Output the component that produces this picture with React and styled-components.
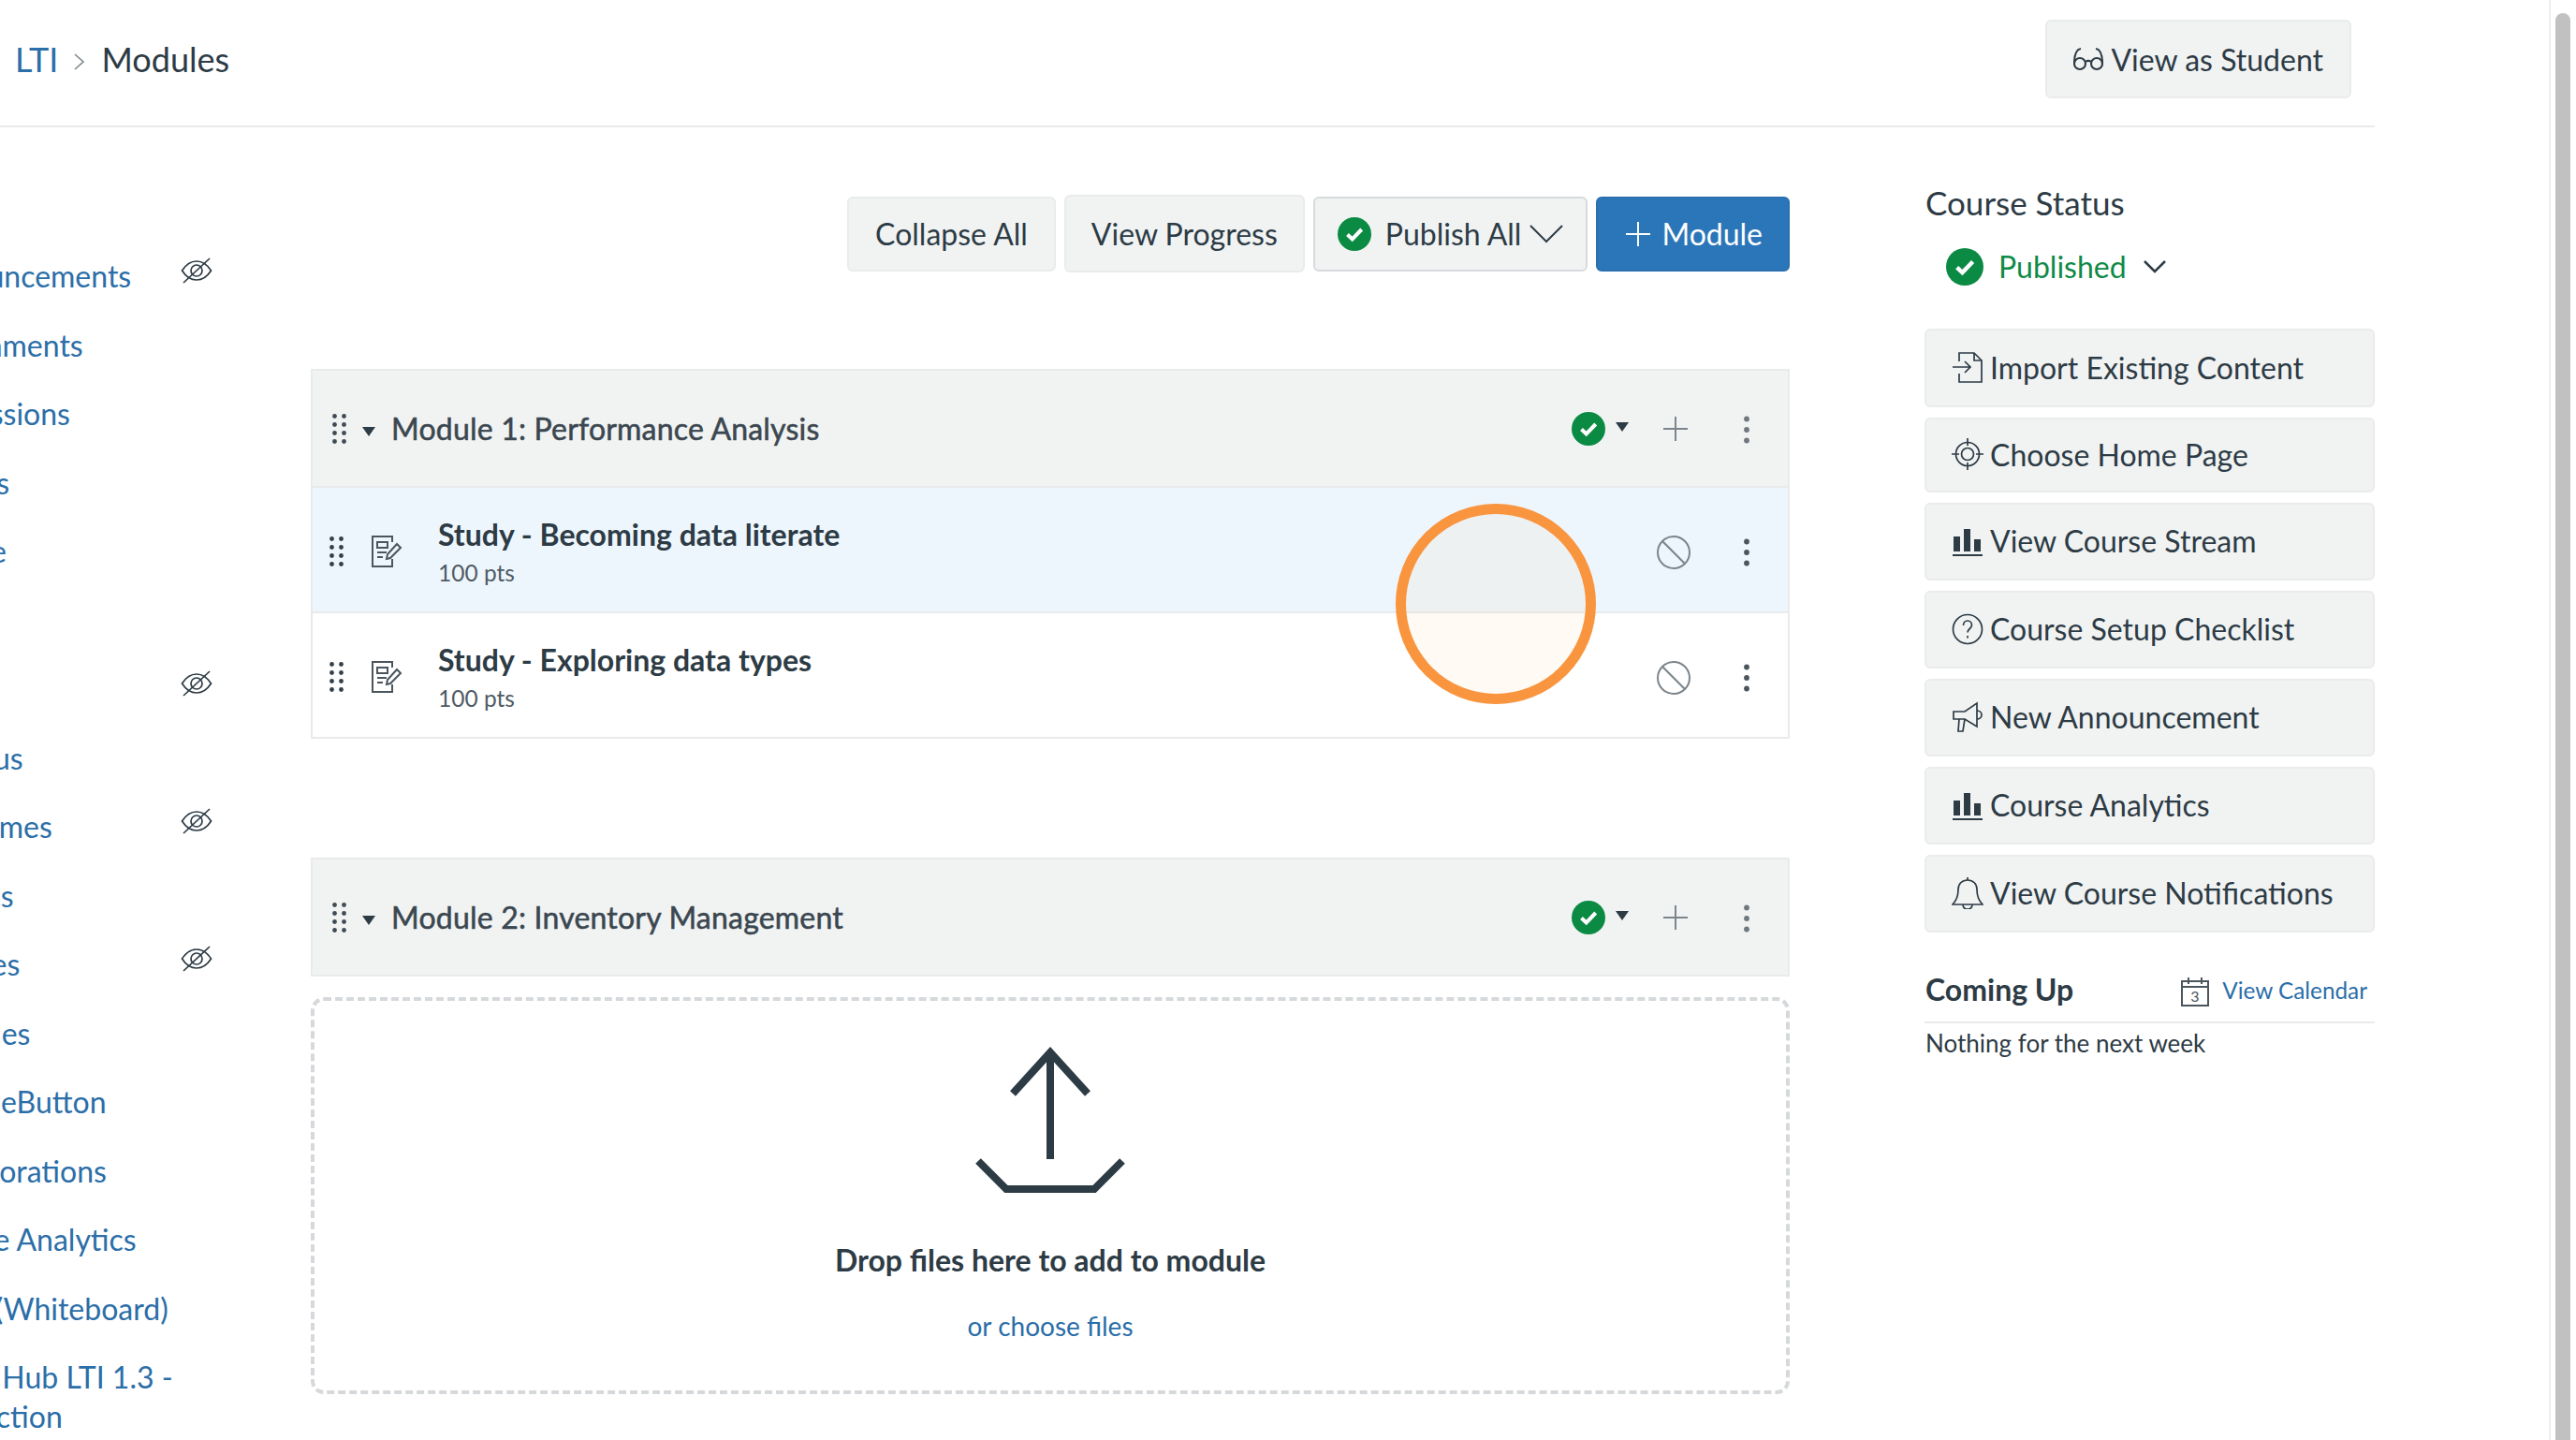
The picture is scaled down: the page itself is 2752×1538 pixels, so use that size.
import React from "react";
import styled, { createGlobalStyle } from "styled-components";

const Global = createGlobalStyle`
  html, body { margin: 0; padding: 0; background: #fff; }
  body { font-family: Lato, "Open Sans", sans-serif; color: #2d3b45; overflow: hidden; font-feature-settings: "liga" 1; }
  * { box-sizing: border-box; }
`;

const Page = styled.div`display: flex; width: 2752px; height: 1538px; overflow: hidden;`;
const Main = styled.div`width: 2723px; flex: none;`;
const Scrollbar = styled.div`width: 29px; flex: none; border-left: 2px solid #eeeeee; padding: 14px 6px 0 5px;`;
const Thumb = styled.div`height: 100%; background: #c1c1c1; border-radius: 8px 8px 0 0;`;

const Header = styled.header`
  width: 2537px; height: 136px; border-bottom: 2px solid #e8eaec;
  display: flex; align-items: flex-start; justify-content: space-between;
  padding: 21px 25px 0 16px;
`;
const Crumbs = styled.nav`display: flex; align-items: center; height: 84px; font-size: 36px;`;
const CrumbLink = styled.span`color: #2b6ea8;`;
const Sep = styled.svg`width: 14px; height: 20px; margin: 6px 16px 0 16px; fill: none; stroke: #7c858b; stroke-width: 1.6;`;

const Btn = styled.div`
  display: flex; align-items: center; flex: none; height: ${p => p.$h || 81}px;
  padding: 0 ${p => p.$pr ?? p.$px ?? 30}px ${p => p.$pb || 0}px ${p => p.$px ?? 30}px; gap: ${p => p.$gap ?? 8}px;
  background: ${p => p.$primary ? "#2b76b9" : "#f1f3f3"};
  color: ${p => p.$primary ? "#fff" : "#2d3b45"};
  border: 2px solid ${p => p.$primary ? "#2a70af" : p.$strong ? "#d7dadd" : "#e9ebec"};
  border-radius: 6px; font-size: 32px; white-space: nowrap;
`;

const Body = styled.div`display: flex; align-items: flex-start;`;
const Nav = styled.nav`width: 421px; margin-left: -89px; flex: none; padding-top: 49px;`;
const NavItem = styled.div`
  display: flex; justify-content: space-between; align-items: flex-start; width: 316px;
  min-height: 73.5px; padding-top: 15.75px; font-size: 32px; line-height: 42px; color: #2b6ea8; white-space: nowrap;
`;
const NavLines = styled.div``;
const NavTucked = styled.div`margin-left: -7px;`;
const EyeIcon = styled.svg`width: 34px; height: 28px; margin-top: 1px; flex: none; fill: none; stroke: #2d3b45; stroke-width: 1.7;`;

const Center = styled.main`width: 1580px; flex: none; padding-top: 71px;`;
const Toolbar = styled.div`display: flex; justify-content: flex-end; align-items: center; gap: 9px; height: 85px; margin-bottom: 102px;`;
const ModuleBox = styled.section`position: relative; margin-bottom: ${p => p.$mb || 0}px;`;
const ModuleHead = styled.div`
  display: flex; align-items: center; height: 127px; padding: 0 41px 0 21px;
  background: #f1f3f3; border: 2px solid #e8eaec;
  font-size: 32px; font-weight: 400; letter-spacing: .2px; -webkit-text-stroke: .55px #3b4750; color: #3b4750;
`;
const Grip = styled.svg`width: 15px; height: 32px; flex: none; fill: ${p => p.$c || "#3f4a52"};`;
const Caret = styled.svg`width: 14px; height: 10px; flex: none; fill: #2d3b45; margin: ${p => p.$m};`;
const Status = styled.div`display: flex; align-items: center; margin-left: auto;`;
const Plus = styled.svg`width: 26px; height: 26px; flex: none; margin: 0 60.5px 0 36.5px; stroke: #7c858b; stroke-width: 2;`;
const Kebab = styled.svg`width: 6px; height: 30px; flex: none; margin-top: 2px; fill: ${p => p.$c};`;
const Item = styled.div`
  display: flex; align-items: center; height: 134px; padding: 4px 41px 0 18px;
  background: ${p => p.$active ? "#eef6fd" : "#fff"};
  border: 2px solid #e8eaec; border-top: 0;
`;
const ItemIcon = styled.svg`width: 34px; height: 36px; flex: none; margin: 0 38px 0 29px; fill: none; stroke: #4b555d; stroke-width: 2;`;
const ItemText = styled.div`display: flex; flex-direction: column; gap: 4.5px;`;
const ItemTitle = styled.div`font-size: 32px; font-weight: 700; line-height: 42px; color: #2d3b45;`;
const ItemPts = styled.div`font-size: 24.500px; line-height: 32px; color: #4f5b64;`;
const Ban = styled.svg`width: 36px; height: 36px; flex: none; margin: 2px 57px 0 auto; fill: none; stroke: #7c858b; stroke-width: 2;`;
const Ring = styled.div`
  position: absolute; left: 1159px; top: 144px; width: 214px; height: 214px; border-radius: 50%;
  border: 11px solid #f9953f; background: rgba(250, 150, 40, .05);
`;
const Drop = styled.div`
  margin-top: 22px; height: 424px; border: 4px dashed #d6d9db; border-radius: 14px;
  display: flex; flex-direction: column; align-items: center; padding-top: 49px;
`;
const Upload = styled.svg`width: 160px; height: 158px; flex: none; fill: none; stroke: #2d3b45; stroke-width: 8;`;
const DropTitle = styled.div`margin-top: 49px; font-size: 32px; font-weight: 700; line-height: 42px;`;
const DropLink = styled.div`margin-top: 30px; font-size: 28px; line-height: 38px; color: #2b6ea8;`;

const Aside = styled.aside`width: 481px; margin-left: 144px; flex: none; padding-top: 58.5px;`;
const AsideTitle = styled.div`font-size: 35px; line-height: 42px; padding-left: 1px;`;
const PublishedRow = styled.div`display: flex; align-items: center; height: 44px; margin: 26px 0 44.5px 23px; font-size: 32px; color: #0f8a48; gap: 16px;`;
const Check = styled.svg`width: ${p => p.$s}px; height: ${p => p.$s}px; flex: none;`;
const Chev = styled.svg`flex: none; fill: none; stroke: #2d3b45; stroke-width: ${p => p.$w || 2.5};`;
const ActionList = styled.div`display: flex; flex-direction: column; gap: 11px;`;
const Icon = styled.svg`width: 34px; height: 34px; flex: none; fill: none; stroke: #2d3b45; stroke-width: 1.7;`;
const UpHead = styled.div`
  display: flex; align-items: center; justify-content: space-between; margin-top: 37px;
  height: 60px; border-bottom: 2px solid #e8eaec; padding: 0 8px 10px 1px;
`;
const UpTitle = styled.div`font-size: 32px; font-weight: 700; line-height: 42px;`;
const CalLink = styled.div`display: flex; align-items: center; gap: 14px; font-size: 24.3px; color: #2b6ea8;`;
const CalIcon = styled.svg`width: 30px; height: 32px; margin-top: 3px; fill: none; stroke: #4b555d; stroke-width: 2;`;
const CalNum = styled.text`font-family: Lato, sans-serif; font-size: 16px; fill: #4b555d; stroke: none; text-anchor: middle;`;
const Nothing = styled.div`margin-top: 3px; font-size: 26px; line-height: 36px; padding-left: 1px;`;

const Dots = ({ c }) => (
  <Grip viewBox="0 0 15 32" $c={c}>
    {[2.5, 11.5, 20.5, 29.5].map(y => [2.5, 12.5].map(x => <circle key={x + "-" + y} cx={x} cy={y} r="2.4" />))}
  </Grip>
);
const Kb = ({ c }) => (
  <Kebab viewBox="0 0 6 30" $c={c}><circle cx="3" cy="3.5" r="2.9" /><circle cx="3" cy="15" r="2.9" /><circle cx="3" cy="26.5" r="2.9" /></Kebab>
);
const CheckCircle = ({ s }) => (
  <Check viewBox="0 0 36 36" $s={s}>
    <circle cx="18" cy="18" r="18" fill="#0b8a43" />
    <path d="M10.5 18.5l5.2 5 10-10.5" fill="none" stroke="#fff" strokeWidth="4" />
  </Check>
);
const Eye = () => (
  <EyeIcon viewBox="0 0 34 28">
    <path d="M1.500 14C6 7 11 4 17 4s11 3 15.500 10C28 21 23 24 17 24S6 21 1.500 14z" />
    <circle cx="17" cy="14" r="6" />
    <path d="M3 27L31 1" />
  </EyeIcon>
);
const PageIcon = () => (
  <ItemIcon viewBox="0 0 34 36">
    <path d="M23 8V2H2v32h21v-8" />
    <rect x="7" y="8" width="11" height="6" />
    <path d="M7 19h10M7 24h6" />
    <path d="M17 26l1-5L28 10l4 4-11 11z" />
  </ItemIcon>
);
const BanIcon = () => (
  <Ban viewBox="0 0 36 36"><circle cx="18" cy="18" r="17" /><path d="M6 6l24 24" /></Ban>
);
const Bars = () => (
  <Icon viewBox="0 0 34 34">
    <path d="M2 12h7v16H2zM13 4h7v24h-7zM24 15h7v13h-7z" fill="#2d3b45" stroke="none" />
    <path d="M1 32h32" strokeWidth="2" />
  </Icon>
);
const Head = ({ title }) => (
  <ModuleHead>
    <Dots />
    <Caret viewBox="0 0 14 10" $m="6px 17px 0 17px"><path d="M0 0h14L7 10z" /></Caret>
    {title}
    <Status>
      <CheckCircle s={36} />
      <Caret viewBox="0 0 14 10" $m="-4px 0 0 11px"><path d="M0 0h14L7 10z" /></Caret>
      <Plus viewBox="0 0 26 26"><path d="M13 0v26M0 13h26" /></Plus>
      <Kb c="#70777d" />
    </Status>
  </ModuleHead>
);

const navItems = [
  ["Home"], ["Announcements", 1], ["Assignments"], ["Discussions"], ["Grades"], ["People"], ["Pages"], ["Files", 1],
  ["Syllabus"], ["Outcomes", 1], ["Rubrics"], ["Quizzes", 1], ["Modules"], ["BigBlueButton"], ["Collaborations"],
  ["Course Analytics"], ["Draw (Whiteboard)"],
];

export default function App() {
  return (
    <>
      <Global />
      <Page>
        <Main>
          <Header>
            <Crumbs>
              <CrumbLink>LTI</CrumbLink>
              <Sep viewBox="0 0 14 20"><path d="M2 2l9 8-9 8" /></Sep>
              <span>Modules</span>
            </Crumbs>
            <Btn $h={84} $px={28}>
              <Icon viewBox="0 0 32 32" style={{ strokeWidth: 2.1, width: 32, height: 32 }}>
                <circle cx="7" cy="21" r="6" /><circle cx="25" cy="21" r="6" />
                <path d="M1 21C1 13 2 6 8 5M31 21C31 13 30 6 24 5M13 19c2-1.500 4-1.500 6 0" />
              </Icon>
              View as Student
            </Btn>
          </Header>
          <Body>
            <Nav>
              {navItems.map(([t, eye]) => (
                <NavItem key={t}>{t}{eye && <Eye />}</NavItem>
              ))}
              <NavItem>
                <NavLines>
                  Portal Hub LTI 1.3 -
                  <NavTucked>Connection</NavTucked>
                </NavLines>
              </NavItem>
            </Nav>
            <Center>
              <Toolbar>
                <Btn $px={28} $h={80}>Collapse All</Btn>
                <Btn $px={27} $h={83}>View Progress</Btn>
                <Btn $px={24} $h={80} $strong $gap={0}>
                  <CheckCircle s={36} />
                  <span style={{ marginLeft: 15 }}>Publish All</span>
                  <Chev viewBox="0 0 36 20" width="36" height="20" style={{ marginLeft: 9 }} $w={2}><path d="M1 1l17 17L35 1" /></Chev>
                </Btn>
                <Btn $primary $px={30} $pr={27} $h={80} $gap={12}>
                  <svg width="26" height="26" viewBox="0 0 26 26" stroke="#fff" strokeWidth="2"><path d="M13 0v26M0 13h26" /></svg>
                  Module
                </Btn>
              </Toolbar>
              <ModuleBox $mb={127}>
                <Head title="Module 1: Performance Analysis" />
                <Item $active>
                  <Dots c="#333f48" />
                  <PageIcon />
                  <ItemText>
                    <ItemTitle>Study - Becoming data literate</ItemTitle>
                    <ItemPts>100 pts</ItemPts>
                  </ItemText>
                  <BanIcon />
                  <Kb c="#4b555d" />
                </Item>
                <Item>
                  <Dots c="#333f48" />
                  <PageIcon />
                  <ItemText>
                    <ItemTitle>Study - Exploring data types</ItemTitle>
                    <ItemPts>100 pts</ItemPts>
                  </ItemText>
                  <BanIcon />
                  <Kb c="#4b555d" />
                </Item>
                <Ring />
              </ModuleBox>
              <ModuleBox>
                <Head title="Module 2: Inventory Management" />
                <Drop>
                  <Upload viewBox="0 0 160 158">
                    <path d="M40 50L80 6l40 44M80 6v114" />
                    <path d="M3 122l30 30h94l30-30" />
                  </Upload>
                  <DropTitle>Drop files here to add to module</DropTitle>
                  <DropLink>or choose files</DropLink>
                </Drop>
              </ModuleBox>
            </Center>
            <Aside>
              <AsideTitle>Course Status</AsideTitle>
              <PublishedRow>
                <CheckCircle s={40} />
                Published
                <Chev viewBox="0 0 24 14" width="24" height="14" style={{ marginLeft: 2 }}><path d="M1 1l11 11L23 1" /></Chev>
              </PublishedRow>
              <ActionList>
                <Btn $h={84} $px={27} $pb={2} $gap={7}>
                  <Icon viewBox="0 0 34 34">
                    <path d="M8 11V2h16l8 8v23H8v-9" /><path d="M24 2v8h8" /><path d="M1 17h19M14 11l6 6-6 6" />
                  </Icon>
                  Import Existing Content
                </Btn>
                <Btn $h={80} $px={27} $pb={2} $gap={7}>
                  <Icon viewBox="0 0 34 34">
                    <circle cx="17" cy="17" r="12.500" /><circle cx="17" cy="17" r="6.500" /><path d="M17 0v8M17 26v8M0 17h8M26 17h8" />
                  </Icon>
                  Choose Home Page
                </Btn>
                <Btn $h={83} $px={27} $pb={2} $gap={7}><Bars />View Course Stream</Btn>
                <Btn $h={83} $px={27} $pb={2} $gap={7}>
                  <Icon viewBox="0 0 34 34">
                    <circle cx="17" cy="17" r="15.500" /><path d="M12.500 13c0-3 2-5 4.500-5s4.500 2 4.500 4.500c0 4-4.500 4-4.500 8" /><path d="M17 24v2.500" />
                  </Icon>
                  Course Setup Checklist
                </Btn>
                <Btn $h={83} $px={27} $pb={2} $gap={7}>
                  <Icon viewBox="0 0 34 34">
                    <path d="M2 11h12L27 2v25l-13-8H2z" /><path d="M8 19l-1 13h5l2-13" /><path d="M27 10c3 0 5 2 5 4.500S30 19 27 19" />
                  </Icon>
                  New Announcement
                </Btn>
                <Btn $h={83} $px={27} $pb={2} $gap={7}><Bars />Course Analytics</Btn>
                <Btn $h={83} $px={27} $pb={2} $gap={7}>
                  <Icon viewBox="0 0 34 34">
                    <path d="M17 3c-6 0-10 4-10 10 0 8-2 12-6 16h32c-4-4-6-8-6-16 0-6-4-10-10-10z" /><path d="M17 0v3M12 29c0 3 2 5 5 5s5-2 5-5" />
                  </Icon>
                  View Course Notifications
                </Btn>
              </ActionList>
              <UpHead>
                <UpTitle>Coming Up</UpTitle>
                <CalLink>
                  <CalIcon viewBox="0 0 30 32">
                    <path d="M1 5h28v26H1zM1 11h28M8 1v7M22 1v7" />
                    <CalNum x="15" y="27">3</CalNum>
                  </CalIcon>
                  View Calendar
                </CalLink>
              </UpHead>
              <Nothing>Nothing for the next week</Nothing>
            </Aside>
          </Body>
        </Main>
        <Scrollbar><Thumb /></Scrollbar>
      </Page>
    </>
  );
}
